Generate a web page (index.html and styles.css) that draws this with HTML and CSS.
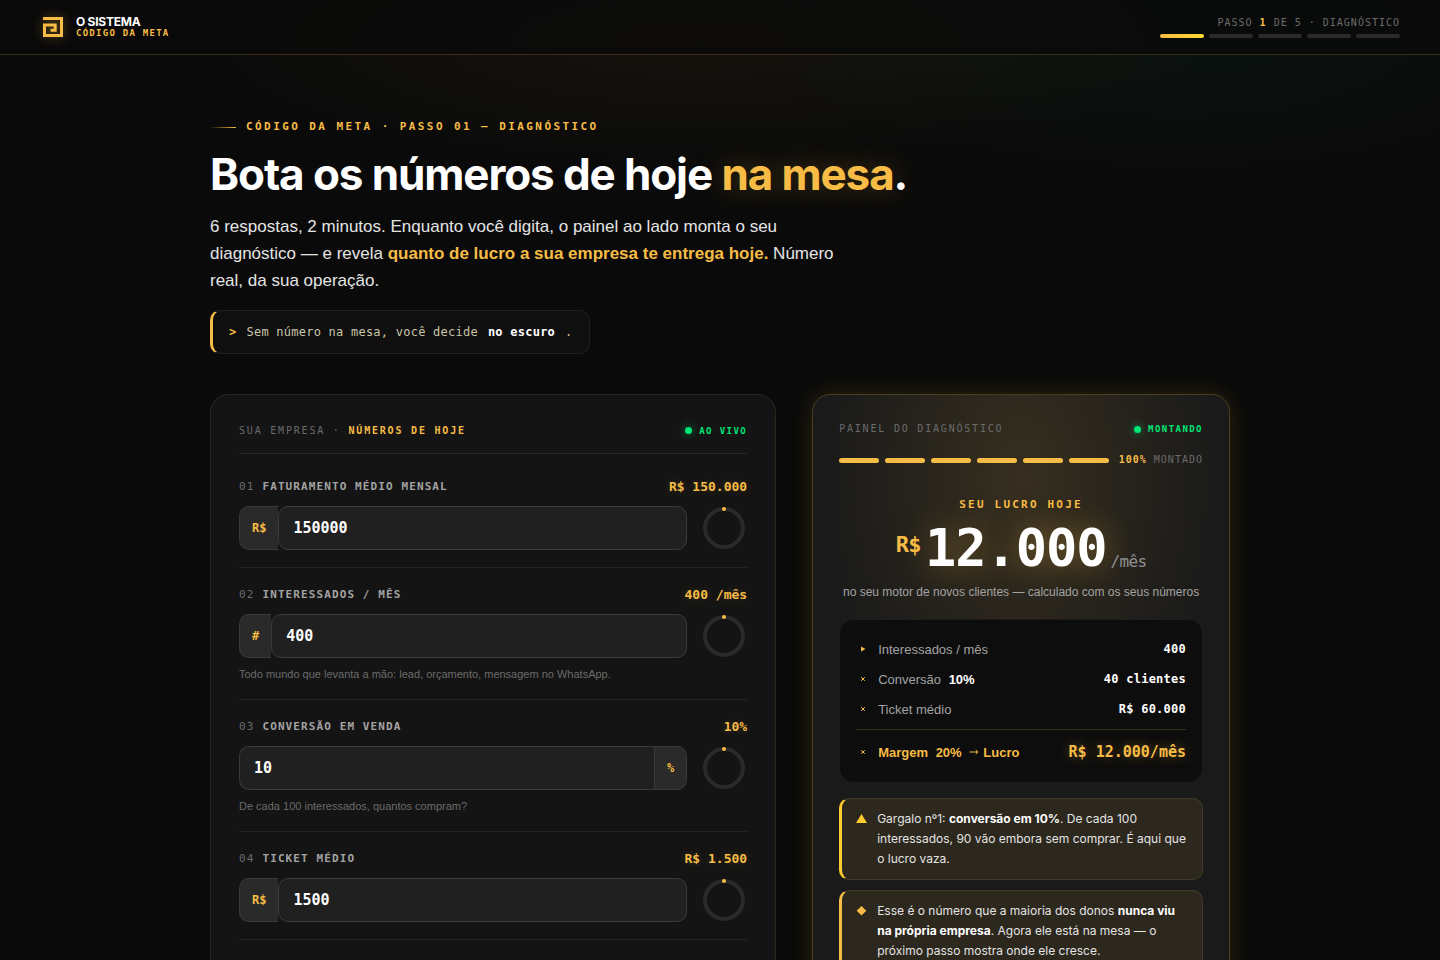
FILE: index.html
```html
<!DOCTYPE html>
<html lang="pt-BR">
<head>
  <meta charset="UTF-8" />
  <meta name="viewport" content="width=device-width, initial-scale=1" />
  <title>O Sistema · Código da Meta</title>
  <link rel="stylesheet" href="styles.css">
</head>
<body>

<header class="topbar">
  <a class="brand" href="#">
    <svg class="brand-mark" viewBox="0 0 26 26" aria-hidden="true">
      <path d="M3 4.5H21.5V21.5H4.5V11H15.2V16.2H10.5" />
    </svg>
    <span class="brand-text">
      <span class="brand-name">O SISTEMA</span>
      <span class="brand-sub">CÓDIGO DA META</span>
    </span>
  </a>
  <div class="progress">
    <div class="progress-label">PASSO <b>1</b> DE 5 · DIAGNÓSTICO</div>
    <div class="progress-bars">
      <span class="on"></span><span></span><span></span><span></span><span></span>
    </div>
  </div>
</header>

<main>
  <section class="hero">
    <div class="eyebrow">CÓDIGO DA META · PASSO 01 — DIAGNÓSTICO</div>
    <h1>Bota os números de hoje <em>na mesa</em>.</h1>
    <p class="lead">6 respostas, 2 minutos. Enquanto você digita, o painel ao lado monta o seu diagnóstico — e revela <b>quanto de lucro a sua empresa te entrega hoje.</b> Número real, da sua operação.</p>
    <div class="quote">
      <span class="prompt">&gt;</span>
      <span>Sem número na mesa, você decide</span>
      <b>no escuro</b>
      <span>.</span>
    </div>
  </section>

  <div class="columns">
    <form class="card">
      <div class="card-head">
        <h2>SUA EMPRESA · <b>NÚMEROS DE HOJE</b></h2>
        <span class="live">AO VIVO</span>
      </div>

      <div class="field">
        <div class="field-top">
          <label for="faturamento"><span>01</span>FATURAMENTO MÉDIO MENSAL</label>
          <output for="faturamento">R$ 150.000</output>
        </div>
        <div class="field-row">
          <div class="control">
            <span class="affix prefix">R$</span>
            <input type="text" inputmode="numeric" id="faturamento" value="150000">
          </div>
          <svg class="ring" viewBox="0 0 46 46" aria-hidden="true">
            <circle cx="23" cy="23" r="19" />
            <circle class="dot" cx="23" cy="4" r="2" />
          </svg>
        </div>
      </div>

      <div class="field">
        <div class="field-top">
          <label for="interessados"><span>02</span>INTERESSADOS / MÊS</label>
          <output for="interessados">400 /mês</output>
        </div>
        <div class="field-row">
          <div class="control">
            <span class="affix prefix">#</span>
            <input type="text" inputmode="numeric" id="interessados" value="400">
          </div>
          <svg class="ring" viewBox="0 0 46 46" aria-hidden="true">
            <circle cx="23" cy="23" r="19" />
            <circle class="dot" cx="23" cy="4" r="2" />
          </svg>
        </div>
        <p class="hint">Todo mundo que levanta a mão: lead, orçamento, mensagem no WhatsApp.</p>
      </div>

      <div class="field">
        <div class="field-top">
          <label for="conversao"><span>03</span>CONVERSÃO EM VENDA</label>
          <output for="conversao">10%</output>
        </div>
        <div class="field-row">
          <div class="control with-suffix">
            <input type="text" inputmode="numeric" id="conversao" value="10">
            <span class="affix suffix">%</span>
          </div>
          <svg class="ring" viewBox="0 0 46 46" aria-hidden="true">
            <circle cx="23" cy="23" r="19" />
            <circle class="dot" cx="23" cy="4" r="2" />
          </svg>
        </div>
        <p class="hint">De cada 100 interessados, quantos compram?</p>
      </div>

      <div class="field">
        <div class="field-top">
          <label for="ticket"><span>04</span>TICKET MÉDIO</label>
          <output for="ticket">R$ 1.500</output>
        </div>
        <div class="field-row">
          <div class="control">
            <span class="affix prefix">R$</span>
            <input type="text" inputmode="numeric" id="ticket" value="1500">
          </div>
          <svg class="ring" viewBox="0 0 46 46" aria-hidden="true">
            <circle cx="23" cy="23" r="19" />
            <circle class="dot" cx="23" cy="4" r="2" />
          </svg>
        </div>
      </div>
    </form>

    <aside class="panel">
      <div class="panel-head">
        <h2>PAINEL DO DIAGNÓSTICO</h2>
        <span class="live">MONTANDO</span>
      </div>
      <div class="build">
        <div class="build-bars">
          <span></span><span></span><span></span><span></span><span></span><span></span>
        </div>
        <div class="build-label"><b>100%</b> MONTADO</div>
      </div>

      <div class="result">
        <div class="result-title">SEU LUCRO HOJE</div>
        <div class="result-value">
          <span class="currency">R$</span><strong>12.000</strong><span class="per">/mês</span>
        </div>
        <p class="result-note">no seu motor de novos clientes — calculado com os seus números</p>
      </div>

      <div class="flow">
        <div class="flow-row">
          <svg viewBox="0 0 14 14" aria-hidden="true"><path class="solid" d="M5 4.5L9.5 7L5 9.5Z" /></svg>
          <span class="flow-label">Interessados / mês</span>
          <span class="flow-value">400</span>
        </div>
        <div class="flow-row">
          <svg viewBox="0 0 14 14" aria-hidden="true"><path d="M5.2 5.2L8.8 8.8M8.8 5.2L5.2 8.8" /></svg>
          <span class="flow-label">Conversão <b>10%</b></span>
          <span class="flow-value">40 clientes</span>
        </div>
        <div class="flow-row">
          <svg viewBox="0 0 14 14" aria-hidden="true"><path d="M5.2 5.2L8.8 8.8M8.8 5.2L5.2 8.8" /></svg>
          <span class="flow-label">Ticket médio</span>
          <span class="flow-value">R$ 60.000</span>
        </div>
        <div class="flow-row total">
          <svg viewBox="0 0 14 14" aria-hidden="true"><path d="M5.2 5.2L8.8 8.8M8.8 5.2L5.2 8.8" /></svg>
          <span class="flow-label">Margem <b>20%</b>
            <svg class="arrow" viewBox="0 0 10 10" aria-hidden="true"><path d="M0.5 5H9M6.8 3L9 5L6.8 7" /></svg>Lucro</span>
          <span class="flow-value">R$ 12.000/mês</span>
        </div>
      </div>

      <div class="alert warn">
        <svg viewBox="0 0 11 20" aria-hidden="true"><path d="M5.5 5L11 14H0Z" /></svg>
        <p>Gargalo nº1: <b>conversão em 10%</b>. De cada 100 interessados, 90 vão embora sem comprar. É aqui que o lucro vaza.</p>
      </div>
      <div class="alert">
        <svg viewBox="0 0 11 20" aria-hidden="true"><path d="M5.5 5L10.3 9.8L5.5 14.6L0.7 9.8Z" /></svg>
        <p>Esse é o número que a maioria dos donos <b>nunca viu na própria empresa</b>. Agora ele está na mesa — o próximo passo mostra onde ele cresce.</p>
      </div>
    </aside>
  </div>
</main>

</body>
</html>
```
FILE: styles.css
```css
:root {
  --gold: #f7bc45;
  --yellow: #ffcb2e;
  --green: #00e676;
  --mono: "DejaVu Sans Mono", monospace;
  --display: Inter, sans-serif;
  --sans: "Liberation Sans", sans-serif;
}
* {
  box-sizing: border-box;
}
body {
  margin: 0;
  font-family: var(--sans);
  color: #fff;
  background:
    radial-gradient(ellipse 520px 130px at 700px 40px, rgba(247, 188, 69, 0.05), transparent),
    radial-gradient(ellipse 420px 150px at 1180px 30px, rgba(0, 230, 118, 0.04), transparent),
    #0a0a0a;
}
h1, h2, p {
  margin: 0;
}

/* top bar */
.topbar {
  display: flex;
  justify-content: space-between;
  align-items: center;
  height: 55px;
  padding: 0 40px;
  background: rgba(10, 10, 10, 0.75);
  border-bottom: 1px solid rgba(247, 188, 69, 0.2);
}
.brand {
  display: flex;
  align-items: center;
  gap: 10px;
  text-decoration: none;
}
.brand-mark {
  width: 26px;
  height: 26px;
  fill: none;
  stroke: var(--gold);
  stroke-width: 3;
  filter: drop-shadow(0 0 6px rgba(247, 188, 69, 0.4));
}
.brand-text {
  display: flex;
  flex-direction: column;
}
.brand-name {
  font-family: var(--display);
  font-size: 12px;
  font-weight: 700;
  line-height: 13px;
  letter-spacing: -0.02em;
  color: #fff;
}
.brand-sub {
  font-family: var(--mono);
  font-size: 9px;
  font-weight: 700;
  line-height: 11px;
  letter-spacing: 0.14em;
  color: var(--gold);
}
.progress-label {
  font-family: var(--mono);
  font-size: 10px;
  line-height: 13px;
  letter-spacing: 0.1em;
  text-align: right;
  color: #6b6b6b;
}
.progress-label b {
  color: var(--gold);
}
.progress-bars {
  display: flex;
  gap: 5px;
  margin-top: 5px;
}
.progress-bars span {
  width: 44px;
  height: 4px;
  border-radius: 2px;
  background: #2a2a2a;
}
.progress-bars .on {
  background: linear-gradient(90deg, #f7bc45, #ffd92e);
}

/* hero */
main {
  max-width: 1060px;
  margin: 0 auto;
  padding: 64px 20px 80px;
}
.eyebrow {
  display: flex;
  align-items: center;
  gap: 10px;
  font-family: var(--mono);
  font-size: 11px;
  font-weight: 700;
  line-height: 16px;
  letter-spacing: 0.22em;
  color: var(--gold);
}
.eyebrow::before {
  content: "";
  width: 26px;
  height: 1px;
  background: linear-gradient(90deg, transparent, var(--gold));
}
h1 {
  margin-top: 15px;
  font-family: var(--display);
  font-size: 44px;
  font-weight: 700;
  line-height: 48px;
  letter-spacing: -0.025em;
}
h1 em {
  font-style: normal;
  color: var(--gold);
  text-shadow: 0 0 28px rgba(247, 188, 69, 0.3);
}
.lead {
  max-width: 640px;
  margin-top: 15px;
  font-size: 17px;
  line-height: 27px;
  color: #e4e4e4;
}
.lead b {
  color: var(--gold);
}
.quote {
  display: flex;
  gap: 10px;
  width: fit-content;
  margin-top: 16px;
  padding: 12px 16px;
  border: 1px solid #1e1e1e;
  border-left: 3px solid var(--gold);
  border-radius: 10px;
  background: #0f0f0f;
  font-family: var(--mono);
  font-size: 12px;
  line-height: 18px;
  letter-spacing: 0.02em;
  color: #c9c5a8;
}
.quote .prompt {
  font-weight: 700;
  color: var(--gold);
}
.quote b {
  color: #fff;
}

/* cards */
.columns {
  display: grid;
  grid-template-columns: 1.355fr 1fr;
  gap: 36px;
  margin-top: 40px;
}
.card {
  padding: 28px;
  border: 1px solid #29271a;
  border-radius: 18px;
  background: #141414;
}
.card-head, .panel-head {
  display: flex;
  justify-content: space-between;
  align-items: center;
}
.card-head {
  height: 31px;
  padding-bottom: 15px;
  border-bottom: 1px solid #262626;
  margin-bottom: 6px;
}
h2 {
  font-family: var(--mono);
  font-size: 10px;
  font-weight: 400;
  line-height: 14px;
  letter-spacing: 0.18em;
  color: #6b6b6b;
}
h2 b {
  color: var(--gold);
}
.live {
  display: flex;
  align-items: center;
  gap: 7px;
  font-family: var(--mono);
  font-size: 9px;
  font-weight: 700;
  line-height: 14px;
  letter-spacing: 0.16em;
  color: var(--green);
}
.live::before {
  content: "";
  width: 7px;
  height: 7px;
  border-radius: 50%;
  background: var(--green);
  box-shadow: 0 0 8px rgba(0, 230, 118, 0.6);
}

/* fields */
.field {
  padding: 17px 0;
  border-bottom: 1px solid #232323;
}
.field-top {
  display: flex;
  justify-content: space-between;
  align-items: center;
  height: 18px;
  margin-bottom: 11px;
  font-family: var(--mono);
}
.field-top label {
  font-size: 11px;
  font-weight: 700;
  letter-spacing: 0.1em;
  color: #a3a3a3;
}
.field-top label span {
  margin-right: 8px;
  font-weight: 400;
  color: #6b6b6b;
}
.field-top output {
  font-size: 13px;
  font-weight: 700;
  color: var(--gold);
  text-shadow: 0 0 10px rgba(247, 188, 69, 0.2);
}
.field-row {
  display: flex;
  align-items: center;
  gap: 14px;
}
.control {
  display: flex;
  flex: 1;
  height: 44px;
}
.affix {
  display: flex;
  align-items: center;
  padding: 0 12px;
  border: 1px solid #3a3a3a;
  background: #2a2a2a;
  font-family: var(--mono);
  font-size: 12px;
  font-weight: 700;
  color: var(--gold);
}
.prefix {
  border-right: none;
  border-radius: 10px 0 0 10px;
}
.suffix {
  border-radius: 0 10px 10px 0;
}
.control input {
  flex: 1;
  min-width: 0;
  padding: 0 14px;
  border: 1px solid #3a3a3a;
  border-radius: 10px;
  background: #202020;
  font-family: var(--mono);
  font-size: 15px;
  font-weight: 700;
  color: #fff;
}
.control input:focus {
  border-color: var(--gold);
  outline: none;
}
.with-suffix input {
  border-right: none;
  border-radius: 10px 0 0 10px;
}
.ring {
  width: 46px;
  height: 46px;
  margin: -1px 0;
  fill: none;
  stroke: #2a2a2a;
  stroke-width: 4;
}
.ring .dot {
  fill: var(--gold);
  stroke: none;
}
.hint {
  margin-top: 8px;
  font-size: 11px;
  line-height: 16px;
  color: #6b6b6b;
}

/* diagnosis panel */
.panel {
  padding: 26px;
  border: 1px solid #4a3d1c;
  border-radius: 18px;
  background:
    radial-gradient(ellipse 200px 300px at 50% 14%, rgba(247, 188, 69, 0.13), transparent),
    #1a1a1a;
  box-shadow: 0 0 22px rgba(255, 203, 46, 0.14);
}
.panel-head {
  height: 16px;
}
.build {
  display: flex;
  align-items: center;
  gap: 10px;
  margin-top: 16px;
}
.build-bars {
  display: flex;
  flex: 1;
  gap: 6px;
}
.build-bars span {
  flex: 1;
  height: 5px;
  border-radius: 3px;
  background: var(--gold);
}
.build-label {
  font-family: var(--mono);
  font-size: 10px;
  line-height: 14px;
  letter-spacing: 0.1em;
  color: #6b6b6b;
}
.build-label b {
  color: var(--gold);
}
.result {
  margin-top: 30px;
  text-align: center;
}
.result-title {
  font-family: var(--mono);
  font-size: 11px;
  font-weight: 700;
  line-height: 16px;
  letter-spacing: 0.2em;
  color: var(--gold);
}
.result-value {
  display: flex;
  justify-content: center;
  align-items: flex-end;
  gap: 4px;
  height: 60px;
  margin-top: 5px;
  font-family: var(--mono);
  letter-spacing: -0.04em;
}
.result-value strong {
  font-size: 52px;
  line-height: 60px;
  letter-spacing: -0.02em;
  text-shadow: 0 0 30px rgba(247, 188, 69, 0.4);
}
.result-value .currency {
  align-self: flex-start;
  font-size: 22px;
  font-weight: 700;
  line-height: 54px;
  color: var(--gold);
}
.result-value .per {
  font-size: 16px;
  line-height: 32px;
  color: #8f8f8f;
}
.result-note {
  margin-top: 5px;
  font-size: 12px;
  line-height: 18px;
  color: #a3a3a3;
}
.flow {
  margin-top: 18px;
  padding: 14px 16px 8px;
  border: 1px solid #1c1c1c;
  border-radius: 14px;
  background: #0d0d0d;
}
.flow-row {
  display: flex;
  align-items: center;
  gap: 8px;
  height: 30px;
  font-size: 13px;
  color: #a3a3a3;
}
.flow-row > svg {
  width: 14px;
  height: 14px;
}
.flow-row svg {
  fill: none;
  stroke: var(--gold);
}
.flow-row .solid {
  fill: var(--gold);
  stroke: none;
}
.flow-label {
  flex: 1;
}
.flow-label b {
  margin: 0 4px;
  color: #fff;
}
.flow-value {
  font-family: var(--mono);
  font-size: 12px;
  font-weight: 700;
  letter-spacing: 0.02em;
  color: #fff;
}
.flow-row.total {
  height: 45px;
  margin-top: 5px;
  border-top: 1px solid #3a301a;
  font-weight: 700;
  color: var(--gold);
}
.total .flow-label b {
  color: var(--gold);
}
.total .flow-value {
  font-size: 15px;
  letter-spacing: 0;
  color: var(--gold);
  text-shadow: 0 0 12px rgba(247, 188, 69, 0.4);
}
.arrow {
  width: 10px;
  height: 10px;
  margin-right: 4px;
}
.alert {
  display: flex;
  gap: 10px;
  margin-top: 10px;
  padding: 10px 14px;
  border: 1px solid #403b26;
  border-left: 3px solid var(--gold);
  border-radius: 10px;
  background: rgba(247, 188, 69, 0.09);
}
.alert.warn {
  margin-top: 15px;
  border-left-color: var(--yellow);
}
.alert svg {
  flex: none;
  width: 11px;
  height: 20px;
  fill: var(--gold);
}
.alert.warn svg {
  fill: var(--yellow);
}
.alert p {
  font-family: var(--display);
  font-size: 12px;
  line-height: 20px;
  color: #e4e4e4;
}
.alert b {
  color: #fff;
}
```
